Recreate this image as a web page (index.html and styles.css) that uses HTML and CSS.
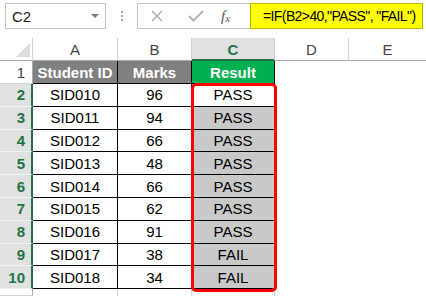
FILE: index.html
```html
<!DOCTYPE html>
<html lang="en">
  <head>
    <meta charset="UTF-8" />
    <title>Result sheet</title>
    <link rel="stylesheet" href="styles.css">
  </head>
  <body>
    <!-- formula bar -->
    <div class="formula-bar">
      <div class="name-box">
        <span>C2</span>
        <span class="drop"></span>
      </div>
      <div class="grip">
        <i></i><i></i><i></i>
      </div>
      <div class="edit-box">
        <svg class="icon" width="12" height="12" viewBox="0 0 12 12">
          <path d="M1 1 L11 11 M11 1 L1 11" stroke="#a6a6a6" stroke-width="1.3" fill="none" />
        </svg>
        <svg class="icon" width="16" height="12" viewBox="0 0 16 12">
          <path d="M1 6 L5.5 10.5 L15 1" stroke="#b4b4b4" stroke-width="2" fill="none" />
        </svg>
        <span class="fx">f<sub>x</sub></span>
      </div>
      <div class="formula">=IF(B2&gt;40,"PASS", "FAIL")</div>
    </div>

    <!-- sheet -->
    <div class="sheet">
      <div class="corner"><span class="tri"></span></div>
      <div class="col-head">A</div>
      <div class="col-head">B</div>
      <div class="col-head active">C</div>
      <div class="col-head">D</div>
      <div class="col-head last">E</div>

      <div class="row-head">1</div>
      <div class="cell title">Student ID</div>
      <div class="cell title">Marks</div>
      <div class="cell title green">Result</div>
      <div class="blank"></div>
      <div class="blank"></div>

      <div class="row-head active">2</div>
      <div class="cell">SID010</div>
      <div class="cell">96</div>
      <div class="cell result first">PASS</div>
      <div class="blank"></div>
      <div class="blank"></div>

      <div class="row-head active">3</div>
      <div class="cell">SID011</div>
      <div class="cell">94</div>
      <div class="cell result">PASS</div>
      <div class="blank"></div>
      <div class="blank"></div>

      <div class="row-head active">4</div>
      <div class="cell">SID012</div>
      <div class="cell">66</div>
      <div class="cell result">PASS</div>
      <div class="blank"></div>
      <div class="blank"></div>

      <div class="row-head active">5</div>
      <div class="cell">SID013</div>
      <div class="cell">48</div>
      <div class="cell result">PASS</div>
      <div class="blank"></div>
      <div class="blank"></div>

      <div class="row-head active">6</div>
      <div class="cell">SID014</div>
      <div class="cell">66</div>
      <div class="cell result">PASS</div>
      <div class="blank"></div>
      <div class="blank"></div>

      <div class="row-head active">7</div>
      <div class="cell">SID015</div>
      <div class="cell">62</div>
      <div class="cell result">PASS</div>
      <div class="blank"></div>
      <div class="blank"></div>

      <div class="row-head active">8</div>
      <div class="cell">SID016</div>
      <div class="cell">91</div>
      <div class="cell result">PASS</div>
      <div class="blank"></div>
      <div class="blank"></div>

      <div class="row-head active">9</div>
      <div class="cell">SID017</div>
      <div class="cell">38</div>
      <div class="cell result">FAIL</div>
      <div class="blank"></div>
      <div class="blank"></div>

      <div class="row-head active">10</div>
      <div class="cell">SID018</div>
      <div class="cell">34</div>
      <div class="cell result">FAIL</div>
      <div class="blank"></div>
      <div class="blank"></div>

      <!-- sliver of row 11 at the bottom edge -->
      <div class="row-head"></div>
      <div class="cell empty"></div>
      <div class="cell empty"></div>
      <div class="cell empty"></div>
      <div class="blank"></div>
      <div class="blank"></div>

      <!-- red highlight round the results -->
      <div class="highlight"></div>
    </div>
  </body>
</html>
```

FILE: styles.css
```css
* {
  box-sizing: border-box;
}
body {
  margin: 0;
  font-family: "Liberation Sans", Arial, sans-serif;
  background: white;
  width: 426px;
  height: 296px;
  overflow: hidden;
  color: #000;
}

/* formula bar */
.formula-bar {
  display: flex;
  align-items: center;
  height: 38px;
  padding: 3px 0 9px 5px;
}
.name-box {
  width: 101px;
  height: 26px;
  border: 1px solid #c6c6c6;
  display: flex;
  align-items: center;
  justify-content: space-between;
  padding: 0 6px 0 6px;
  font-size: 15px;
  color: #222;
}
.drop {
  width: 0;
  height: 0;
  border-left: 4px solid transparent;
  border-right: 4px solid transparent;
  border-top: 4px solid #7a7a7a;
}
.grip {
  width: 31px;
  display: flex;
  flex-direction: column;
  align-items: center;
  gap: 2px;
}
.grip i {
  width: 2px;
  height: 2px;
  background: #a8a8a8;
}
.edit-box {
  width: 113px;
  height: 26px;
  border: 1px solid #c6c6c6;
  border-right: none;
  display: flex;
  align-items: center;
  padding-left: 13px;
}
.edit-box .icon:nth-child(2) {
  margin-left: 25px;
}
.fx {
  margin-left: 17px;
  font-family: "Liberation Serif", serif;
  font-style: italic;
  font-size: 15px;
  color: #555;
}
.fx sub {
  font-size: 11px;
  vertical-align: -1px;
}
.formula {
  width: 173px;
  height: 26px;
  background: #ffff00;
  border: 1px solid #b8b800;
  padding-left: 12px;
  font-size: 14px;
  letter-spacing: -0.6px;
  line-height: 24px;
  white-space: nowrap;
  overflow: hidden;
}

/* sheet grid */
.sheet {
  position: relative;
  display: grid;
  grid-template-columns: 33px 85px 74px 83px 74px 77px;
  grid-template-rows: 23px 23px repeat(9, 22.8px) 7px;
  font-size: 15px;
}
.corner {
  border-right: 1px solid #d4d4d4;
  border-bottom: 1px solid #ababab;
  position: relative;
}
.tri {
  position: absolute;
  right: 2px;
  bottom: 3px;
  width: 0;
  height: 0;
  border-left: 14px solid transparent;
  border-bottom: 14px solid #dcdcdc;
}
.col-head {
  display: flex;
  align-items: center;
  justify-content: center;
  color: #444;
  border-right: 1px solid #d4d4d4;
  border-bottom: 1px solid #ababab;
}
.col-head.active {
  background: #e1e1e1;
  color: #217346;
  font-weight: bold;
  border-bottom: 2px solid #217346;
  padding-top: 1px;
}
.col-head.last {
  border-right: none;
}
.row-head {
  display: flex;
  align-items: center;
  justify-content: flex-end;
  padding-right: 7px;
  color: #444;
  border-right: 1px solid #ababab;
  border-bottom: 1px solid #d4d4d4;
}
.row-head.active {
  background: #e1e1e1;
  color: #217346;
  font-weight: bold;
  border-right: 2px solid #217346;
  border-bottom: 1px solid #f2f2f2;
  padding-right: 6px;
}
.cell {
  display: flex;
  align-items: center;
  justify-content: center;
  border-right: 1px solid #000;
  border-bottom: 1px solid #000;
}
.cell.title {
  background: #808080;
  color: white;
  font-weight: bold;
}
.cell.title.green {
  background: #00b050;
}
.cell.result {
  background: #c9c9c9;
}
.cell.result.first {
  background: white;
}
.cell.empty {
  border-right: 1px solid #d4d4d4;
  border-bottom: none;
}
.blank {
  background: white;
}

.highlight {
  position: absolute;
  left: 191px;
  top: 45px;
  width: 86px;
  height: 209px;
  border: 3px solid #ff0000;
  border-radius: 5px;
  pointer-events: none;
}
```
